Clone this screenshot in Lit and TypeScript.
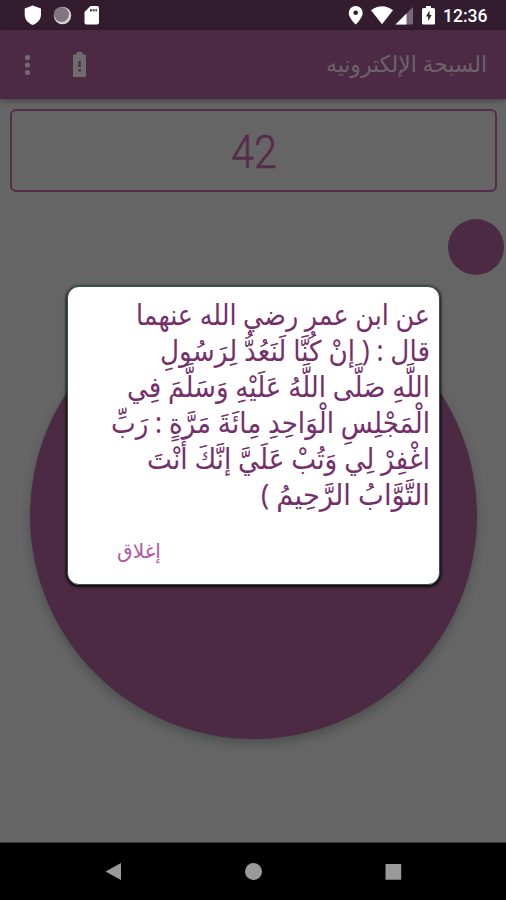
import { LitElement, html, css, svg } from "lit";
import { customElement } from "lit/decorators.js";

interface Line {
  text: string;
  width: number;
}

const HADITH: Line[] = [
  { text: "عن ابن عمر رضي الله عنهما", width: 294 },
  { text: "قال : ( إنْ كُنَّا لَنَعُدُّ لِرَسُولِ", width: 270 },
  { text: "اللَّهِ صَلَّى اللَّهُ عَلَيْهِ وَسَلَّمَ فِي", width: 303 },
  { text: "الْمَجْلِسِ الْوَاحِدِ مِائَةَ مَرَّةٍ : رَبِّ", width: 319 },
  { text: "اغْفِرْ لِي وَتُبْ عَلَيَّ إنَّكَ أَنْتَ", width: 283 },
  { text: "التَّوَّابُ الرَّحِيمُ )", width: 169 },
];

@customElement("app-root")
export class AppRoot extends LitElement {
  static styles = css`
    :host {
      display: flex;
      flex-direction: column;
      position: relative;
      width: 506px;
      height: 900px;
      overflow: hidden;
      background: #656565;
      font-family: "Noto Sans", "DejaVu Sans", sans-serif;
    }
    svg { display: block; overflow: visible; }
    .status { height: 30px; background: #331c2d; flex: none; }
    .bar {
      height: 69px;
      flex: none;
      box-sizing: border-box;
      padding: 0 19px 0 22px;
      display: flex;
      align-items: center;
      background: #4c2a43;
      box-shadow: 0 2px 5px rgba(0, 0, 0, 0.3);
      z-index: 1;
    }
    .battery { margin-left: 40px; }
    .title { margin-left: auto; }
    .title text { font-size: 23px; fill: #6c636a; }
    .content { flex: 1; display: flex; flex-direction: column; }
    .counter {
      height: 83px;
      box-sizing: border-box;
      margin: 10px 9px 0 10px;
      border: 2px solid #542b49;
      border-radius: 6px;
      display: flex;
      align-items: center;
      justify-content: center;
    }
    .digits { font: 300 47px Roboto, sans-serif; fill: #562b4a; stroke: #562b4a; stroke-width: 0.5px; }
    .small {
      align-self: flex-end;
      width: 56px;
      height: 56px;
      margin: 27px 2px 0 0;
      border-radius: 50%;
      background: #4c2a43;
    }
    .big {
      align-self: center;
      width: 447px;
      height: 447px;
      margin-top: 17px;
      margin-left: 1px;
      border-radius: 50%;
      background: #4c2a43;
      box-shadow: 0 5px 10px rgba(20, 35, 30, 0.3);
    }
    .nav {
      height: 58px;
      flex: none;
      display: flex;
      align-items: center;
      justify-content: center;
      background: #000;
      border-top: 1px solid #383838;
      box-sizing: border-box;
    }
    .dialog {
      position: absolute;
      left: 67px;
      top: 286px;
      width: 373px;
      height: 299px;
      box-sizing: border-box;
      padding: 12px 9px 0;
      border-radius: 12px;
      background: #fff;
      border: 1px solid #34574a;
      box-shadow: 0 1px 3px 1px rgba(0, 0, 0, 0.85);
      display: flex;
      flex-direction: column;
      align-items: flex-end;
    }
    .line { height: 36px; }
    .line text { font-size: 28.5px; fill: #75306b; }
    .close {
      align-self: flex-start;
      margin: 17px 0 0 40px;
      padding: 0;
      border: 0;
      background: none;
      font-family: inherit;
    }
    .close text { font-size: 20px; fill: #b158a5; }
    .time { font: 500 18px Roboto, sans-serif; fill: #fff; }
  `;

  private fitted(text: string, width: number, height: number, baseline: number) {
    return html`<svg width=${width} height=${height}>
      ${svg`<text direction="rtl" x=${width} y=${baseline} textLength=${width} lengthAdjust="spacingAndGlyphs">${text}</text>`}
    </svg>`;
  }

  render() {
    return html`
      <div class="status">
        <svg width="506" height="30" fill="#fff">
          <path d="M32.700 5.500 41 8.500v6c0 5-3.500 8.500-8.300 10.500C28 23 24.700 19.500 24.700 14.500v-6z" />
          <circle cx="62.500" cy="15.500" r="8.700" fill="#d9d3d8" />
          <circle cx="61.500" cy="14.500" r="7.500" fill="#83757f" />
          <path d="M90.500 6H97a2 2 0 0 1 2 2v14.500a2 2 0 0 1-2 2H86.500a2 2 0 0 1-2-2V12z" />
          <path d="M90 9h2v2.500h-2zm2.700 0h2v2.500h-2zm2.700 0H97v2.500h-1.600z" fill="#604c5b" />
          <path fill-rule="evenodd" d="M355.700 6a7 7 0 0 1 7 7c0 5-7 11.500-7 11.500s-7-6.500-7-11.500a7 7 0 0 1 7-7zm0 4.500a2.300 2.300 0 1 0 0 4.600 2.300 2.300 0 0 0 0-4.600z" />
          <path d="M371 10.300Q382 2 393 10.300L382 24.300z" />
          <path d="M413 7v17.500h-17.500z" fill="#78677a" />
          <path d="M406.500 13.500v11h-11z" />
          <path d="M426 6h5v2h2.500a1.500 1.500 0 0 1 1.500 1.500v13.500a1.500 1.500 0 0 1-1.500 1.500h-10a1.500 1.500 0 0 1-1.500-1.500V9.500A1.500 1.500 0 0 1 423.500 8h2.500z" />
          <path d="m429.500 10.500-3.500 6h2.200v4.500l3.500-6h-2.200z" fill="#331c2d" />
          <text class="time" x="443" y="22.300" textLength="44.500" lengthAdjust="spacingAndGlyphs">12:36</text>
        </svg>
      </div>
      <div class="bar">
        <svg width="11" height="24" fill="#706b6f">
          <circle cx="5.500" cy="4.500" r="2.600" /><circle cx="5.500" cy="12" r="2.600" /><circle cx="5.500" cy="19.500" r="2.600" />
        </svg>
        <svg class="battery" width="13" height="26" fill="#706b6f">
          <path d="M4 0h5l1 2.500h2a1 1 0 0 1 1 1V24a1 1 0 0 1-1 1H1a1 1 0 0 1-1-1V3.500a1 1 0 0 1 1-1h2z" />
          <path d="M5.500 9h2.200v6H5.500zm0 8h2.200v2.500H5.500z" fill="#4c2a43" />
        </svg>
        <div class="title">${this.fitted("السبحة الإلكترونيه", 161, 30, 22)}</div>
      </div>
      <div class="content">
        <div class="counter">
          <svg width="46" height="36">
            <text class="digits" x="0" y="34.500" textLength="46" lengthAdjust="spacingAndGlyphs">42</text>
          </svg>
        </div>
        <div class="small"></div>
        <div class="big"></div>
      </div>
      <div class="nav">
        <svg width="506" height="58" fill="#9a9a9a">
          <path d="M105.500 28.500 121 20v17z" />
          <circle cx="253.500" cy="28.500" r="8.500" />
          <rect x="385.500" y="21" width="15.700" height="15.700" rx="0.500" />
        </svg>
      </div>
      <div class="dialog">
        ${HADITH.map((l) => html`<div class="line">${this.fitted(l.text, l.width, 35, 26)}</div>`)}
        <button class="close">${this.fitted("إغلاق", 44, 30, 26)}</button>
      </div>
    `;
  }
}
